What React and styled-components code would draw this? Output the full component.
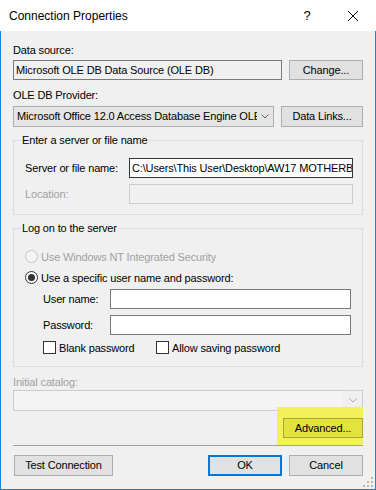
import React from 'react';
import styled, { createGlobalStyle } from 'styled-components';

const Global = createGlobalStyle`
  html, body { margin: 0; padding: 0; background: #fff; }
  body { font-family: "Liberation Sans", Arial, sans-serif; }
  *, *::before, *::after { box-sizing: border-box; }
`;

const Window = styled.div`
  width: 376px;
  height: 490px;
  display: flex;
  flex-direction: column;
  font-family: "Liberation Sans", Arial, sans-serif;
  font-size: 11px;
  letter-spacing: -0.15px;
  color: #000;
`;

const TitleBar = styled.div`
  height: 31px;
  flex: 0 0 31px;
  background: #fff;
  display: flex;
  align-items: stretch;
`;

const Title = styled.div`
  flex: 1;
  display: flex;
  align-items: center;
  padding: 1px 0 0 9px;
  font-size: 12px;
  line-height: 15px;
  letter-spacing: 0;
`;

const CaptionButton = styled.div`
  width: 46px;
  display: flex;
  align-items: center;
  justify-content: center;
  font-size: 13px;
  line-height: 15px;
`;

const Body = styled.div`
  flex: 1;
  position: relative;
  display: flex;
  flex-direction: column;
  background: #f0f0f0;
  border: 1px solid #1883d7;
  border-top: none;
  padding: 13px 12px 13px 12px;
`;

const Label = styled.div`
  line-height: 13px;
  white-space: nowrap;
  margin-top: ${p => p.$mt || 0}px;
  color: ${p => (p.$disabled ? '#a0a0a0' : '#000')};
`;

const Row = styled.div`
  display: flex;
  align-items: center;
  gap: 7px;
  margin-top: ${p => p.$mt || 0}px;
`;

const TextBox = styled.div`
  height: 20px;
  flex: ${p => (p.$w ? `0 0 ${p.$w}px` : '1 1 auto')};
  min-width: 0;
  border: 1px solid ${p => p.$border || '#7a7a7a'};
  background: ${p => p.$bg || '#fff'};
  padding: 0 2px;
  line-height: 18px;
  white-space: nowrap;
  overflow: hidden;
`;

const Combo = styled.div`
  height: 21px;
  min-width: 0;
  flex: ${p => (p.$w ? `0 0 ${p.$w}px` : '1 1 auto')};
  display: flex;
  align-items: center;
  border: 1px solid ${p => (p.$disabled ? '#cccccc' : '#adadad')};
  background: ${p => (p.$disabled ? '#f4f4f4' : '#e5e5e5')};
  margin-top: ${p => p.$mt || 0}px;
`;

const ComboText = styled.div`
  flex: 1;
  min-width: 0;
  padding-left: 3px;
  white-space: nowrap;
  overflow: hidden;
  line-height: 19px;
`;

const ComboArrow = styled.div`
  width: ${p => p.$w || 16}px;
  flex: 0 0 auto;
  align-self: stretch;
  display: flex;
  align-items: center;
  justify-content: center;
  background: ${p => (p.$disabled ? '#f0f0f0' : 'transparent')};
`;

const Button = styled.button`
  height: ${p => p.$h || 21}px;
  width: ${p => p.$w}px;
  flex: 0 0 ${p => p.$w}px;
  margin: 0;
  padding: 0;
  font-family: inherit;
  font-size: 11px;
  letter-spacing: -0.15px;
  color: #000;
  background: #e1e1e1;
  border: 1px solid #adadad;
  border-radius: 0;
  line-height: 17px;
`;

const DefaultButton = styled(Button)`
  border: 2px solid #0078d7;
  margin-left: auto;
`;

const HighlightButton = styled(Button)`
  background: #e4e23d;
  border-color: #a9a72f;
`;

const Group = styled.fieldset`
  margin: 7px 0 0 0;
  padding: 0 0 ${p => p.$pb}px 0;
  border: 1px solid #dcdcdc;
  min-width: 0;
`;

const Legend = styled.legend`
  margin-left: 7px;
  padding: 0 1px;
  line-height: 13px;
  font-size: 11px;
`;

const GroupContent = styled.div`
  display: flex;
  flex-direction: column;
  padding: ${p => p.$pt}px ${p => p.$pr}px 0 11px;
`;

const FieldGrid = styled.div`
  display: grid;
  grid-template-columns: ${p => p.$label}px 1fr;
  row-gap: 6px;
  align-items: center;
  margin-top: ${p => p.$mt || 0}px;
  padding-left: ${p => p.$indent || 0}px;
`;

const OptionRow = styled.div`
  height: ${p => p.$h || 17}px;
  display: flex;
  align-items: center;
  gap: 3px;
  margin-top: ${p => p.$mt || 0}px;
  color: ${p => (p.$disabled ? '#a0a0a0' : '#000')};
  white-space: nowrap;
`;

const CheckGroup = styled.div`
  display: flex;
  margin-top: 6px;
  padding-left: 18px;
`;

const CheckItem = styled(OptionRow)`
  width: ${p => p.$w}px;
  height: 13px;
`;

const HighlightArea = styled.div`
  align-self: flex-end;
  width: 86px;
  margin-top: -4px;
  padding: 11px 0 7px 6px;
  background: #f2f05b;
  display: flex;
  justify-content: flex-end;
`;

const Separator = styled.div`
  height: 1px;
  background: #a0a0a0;
`;

const ButtonBar = styled.div`
  display: flex;
  gap: 7px;
  margin-top: 9px;
  padding-left: 1px;
`;

const Grip = styled.svg`
  position: absolute;
  right: 2px;
  bottom: 2px;
`;

const Chevron = ({ color = '#606060' }) => (
  <svg width="8" height="5" viewBox="0 0 8 5">
    <path d="M0.5 0.5 L4 4 L7.5 0.5" stroke={color} strokeWidth="1" fill="none" />
  </svg>
);

const Radio = ({ checked, disabled }) => (
  <svg width="13" height="13" viewBox="0 0 13 13">
    <circle cx="6.5" cy="6.5" r="6" fill={disabled ? '#f4f4f4' : '#fff'} stroke={disabled ? '#c4c4c4' : '#333'} strokeWidth="1" />
    {checked && <circle cx="6.5" cy="6.5" r="3.5" fill="#333" />}
  </svg>
);

const Check = () => (
  <svg width="13" height="13" viewBox="0 0 13 13">
    <rect x="0.5" y="0.5" width="12" height="12" fill="#fff" stroke="#333" strokeWidth="1" />
  </svg>
);

export default function App() {
  return (
    <>
      <Global />
      <Window>
        <TitleBar>
          <Title>Connection Properties</Title>
          <CaptionButton>?</CaptionButton>
          <CaptionButton>
            <svg width="10" height="10" viewBox="0 0 10 10">
              <path d="M0 0 L10 10 M10 0 L0 10" stroke="#000" strokeWidth="1" />
            </svg>
          </CaptionButton>
        </TitleBar>
        <Body>
          <Label>Data source:</Label>
          <Row $mt={3}>
            <TextBox $w={269} $bg="#f0f0f0">Microsoft OLE DB Data Source (OLE DB)</TextBox>
            <Button $w={74} $h={20}>Change...</Button>
          </Row>
          <Label $mt={9}>OLE DB Provider:</Label>
          <Row $mt={4}>
            <Combo $w={261}>
              <ComboText>Microsoft Office 12.0 Access Database Engine OLE DB Provider</ComboText>
              <ComboArrow $w={16}><Chevron /></ComboArrow>
            </Combo>
            <Button $w={82}>Data Links...</Button>
          </Row>

          <Group $pb={10}>
            <Legend>Enter a server or file name</Legend>
            <GroupContent $pt={11} $pr={9}>
              <FieldGrid $label={104}>
                <Label>Server or file name:</Label>
                <TextBox $border="#333">C:\Users\This User\Desktop\AW17 MOTHERBOARD.accdb</TextBox>
                <Label $disabled>Location:</Label>
                <TextBox $border="#cccccc" $bg="#f0f0f0" />
              </FieldGrid>
            </GroupContent>
          </Group>

          <Group $pb={12}>
            <Legend>Log on to the server</Legend>
            <GroupContent $pt={13} $pr={11}>
              <OptionRow $disabled>
                <Radio disabled />
                <span>Use Windows NT Integrated Security</span>
              </OptionRow>
              <OptionRow $mt={4}>
                <Radio checked />
                <span>Use a specific user name and password:</span>
              </OptionRow>
              <FieldGrid $label={67} $mt={3} $indent={18}>
                <Label>User name:</Label>
                <TextBox />
                <Label>Password:</Label>
                <TextBox />
              </FieldGrid>
              <CheckGroup>
                <CheckItem $w={113}>
                  <Check />
                  <span>Blank password</span>
                </CheckItem>
                <CheckItem $w={180}>
                  <Check />
                  <span>Allow saving password</span>
                </CheckItem>
              </CheckGroup>
            </GroupContent>
          </Group>

          <Label $mt={9} $disabled>Initial catalog:</Label>
          <Combo $mt={1} $disabled>
            <ComboText />
            <ComboArrow $w={19} $disabled><Chevron color="#a8a8a8" /></ComboArrow>
          </Combo>
          <HighlightArea>
            <HighlightButton $w={80} $h={20}>Advanced...</HighlightButton>
          </HighlightArea>
          <Separator />
          <ButtonBar>
            <Button $w={99}>Test Connection</Button>
            <DefaultButton $w={74}>OK</DefaultButton>
            <Button $w={74}>Cancel</Button>
          </ButtonBar>
          <Grip width="10" height="10" viewBox="0 0 10 10">
            <g fill="#b8b8b8">
              <rect x="8" y="0" width="2" height="2" />
              <rect x="4" y="4" width="2" height="2" />
              <rect x="8" y="4" width="2" height="2" />
              <rect x="0" y="8" width="2" height="2" />
              <rect x="4" y="8" width="2" height="2" />
              <rect x="8" y="8" width="2" height="2" />
            </g>
          </Grip>
        </Body>
      </Window>
    </>
  );
}
